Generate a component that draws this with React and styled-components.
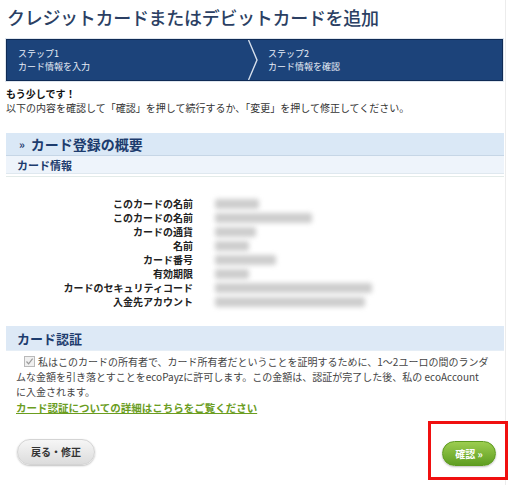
import React from 'react';
import styled, { createGlobalStyle } from 'styled-components';

const GlobalStyle = createGlobalStyle`
  html, body {
    margin: 0;
    padding: 0;
    background: #fff;
  }
  body {
    font-family: "Noto Sans CJK JP", "Noto Sans", "Liberation Sans", sans-serif;
  }
`;

const Page = styled.div`
  width: 499px;
  min-height: 485px;
  padding-left: 6px;
  border-right: 1px solid #ececec;
  box-sizing: content-box;
  display: flex;
  flex-direction: column;
`;

const Title = styled.h1`
  margin: 0;
  padding: 3px 0 0 1px;
  height: 39px;
  box-sizing: border-box;
  font-size: 18px;
  line-height: 28px;
  font-weight: 500;
  color: #2b3f63;
  letter-spacing: -0.3px;
`;

const StepBar = styled.div`
  display: flex;
  height: 42px;
  width: 497px;
  background: #1c437a;
  border: 1px solid #0f2b55;
  box-shadow: 0 0 0 1px #dfe6ee;
  box-sizing: border-box;
`;

const Step = styled.div`
  display: flex;
  flex-direction: column;
  justify-content: center;
  width: ${p => (p.$grow ? 'auto' : '230px')};
  flex: ${p => (p.$grow ? 1 : 'none')};
  padding-left: ${p => (p.$grow ? '10px' : '11px')};
  color: #e8eef7;
  font-size: 9px;
  line-height: 13px;
`;

const Chevron = styled.svg`
  flex: none;
  display: block;
`;

const Intro = styled.div`
  margin-top: 6px;
  font-size: 10px;
  line-height: 14px;
  color: #333;
`;

const Strong = styled.div`
  font-weight: 700;
  color: #111;
`;

const SectionBand = styled.div`
  margin-top: ${p => p.$top || 0}px;
  height: ${p => p.$h}px;
  width: 498px;
  box-sizing: border-box;
  display: flex;
  align-items: center;
  padding-left: ${p => p.$pl || 11}px;
  background: ${p => p.$bg};
  border-bottom: 1px solid ${p => p.$line};
  color: #1d3c6e;
  font-weight: 700;
  font-size: ${p => p.$fs}px;
`;

const Raquo = styled.span`
  font-size: 11px;
  margin-right: 6px;
`;

const InfoGrid = styled.div`
  display: grid;
  grid-template-columns: 187px 1fr;
  column-gap: 22px;
  padding: 20px 0 17px;
  border-top: 1px solid #e3ebe9;
  margin-top: 2px;
  width: 498px;
`;

const Label = styled.div`
  text-align: right;
  font-size: 10px;
  font-weight: 700;
  line-height: 14px;
  color: #222;
  white-space: nowrap;
`;

const ValueCell = styled.div`
  display: flex;
  align-items: center;
  height: 14px;
`;

const Blur = styled.span`
  display: block;
  height: 10px;
  background: #cdcdcd;
  filter: blur(2.5px);
  border-radius: 2px;
`;

const AuthText = styled.p`
  margin: 3px 0 0;
  padding-left: 10px;
  width: 485px;
  font-size: 10px;
  line-height: 15px;
  color: #444;
`;

const CheckBox = styled.span`
  display: inline-block;
  width: 9px;
  height: 9px;
  margin: 0 3px 0 8px;
  border: 1px solid #b9b9b9;
  background: #f0f0f0;
  position: relative;
  top: 1px;
  vertical-align: baseline;
  svg { display: block; }
`;

const MoreLink = styled.a`
  display: block;
  margin: 1px 0 0 10px;
  font-size: 10.5px;
  line-height: 15px;
  font-weight: 700;
  color: #6b9d1f;
  text-decoration: underline;
  cursor: pointer;
`;

const Actions = styled.div`
  display: flex;
  justify-content: space-between;
  align-items: center;
  margin-top: 22px;
  padding: 0 8px 0 11px;
  width: 498px;
  box-sizing: border-box;
`;

const BackButton = styled.button`
  width: 78px;
  height: 26px;
  border: 1px solid #d4d4d4;
  border-radius: 13px;
  background: linear-gradient(#f6f6f6, #dcdcdc);
  box-shadow: 0 1px 2px rgba(0, 0, 0, 0.25);
  font-family: inherit;
  font-size: 10px;
  font-weight: 700;
  color: #333;
  cursor: pointer;
`;

const ConfirmWrap = styled.div`
  position: relative;
  margin-top: 2px;
`;

const ConfirmButton = styled.button`
  width: 54px;
  height: 25px;
  border: 1px solid #5d9a1f;
  border-radius: 13px;
  background: linear-gradient(#9ccd4f, #5f9e22);
  box-shadow: 0 1px 2px rgba(0, 0, 0, 0.25);
  font-family: inherit;
  font-size: 10px;
  font-weight: 700;
  color: #fff;
  cursor: pointer;
  padding: 0;
`;

const Highlight = styled.span`
  position: absolute;
  top: -18px;
  left: -14px;
  right: -12px;
  bottom: -14px;
  border: 3px solid #f01010;
  pointer-events: none;
`;

const rows = [
  ['このカードの名前', 44],
  ['このカードの名前', 97],
  ['カードの通貨', 41],
  ['名前', 34],
  ['カード番号', 61],
  ['有効期限', 34],
  ['カードのセキュリティコード', 157],
  ['入金先アカウント', 150],
];

export default function App() {
  return (
    <>
      <GlobalStyle />
      <Page>
        <Title>クレジットカードまたはデビットカードを追加</Title>
        <StepBar>
          <Step>
            <span>ステップ1</span>
            <span>カード情報を入力</span>
          </Step>
          <Chevron width="10" height="40" viewBox="0 0 10 40">
            <path d="M0.5 0 L9 20 L0.5 40" fill="none" stroke="#d7e0ec" strokeWidth="1.4" />
          </Chevron>
          <Step $grow>
            <span>ステップ2</span>
            <span>カード情報を確認</span>
          </Step>
        </StepBar>

        <Intro>
          <Strong>もう少しです！</Strong>
          <div>以下の内容を確認して「確認」を押して続行するか、「変更」を押して修正してください。</div>
        </Intro>

        <SectionBand $top={18} $h={23} $fs={14} $bg="#dae8f6" $line="#c6d6e6" $pl={13}>
          <Raquo>»</Raquo>カード登録の概要
        </SectionBand>
        <SectionBand $h={18} $fs={11} $bg="#eef4fb" $line="#dfe8ef">
          カード情報
        </SectionBand>

        <InfoGrid>
          {rows.map(([label, w], i) => (
            <React.Fragment key={i}>
              <Label>{label}</Label>
              <ValueCell>
                <Blur style={{ width: w }} />
              </ValueCell>
            </React.Fragment>
          ))}
        </InfoGrid>

        <SectionBand $h={25} $fs={13} $bg="#dde9f6" $line="#e6eef6">
          カード認証
        </SectionBand>

        <AuthText>
          <CheckBox>
            <svg width="9" height="9" viewBox="0 0 9 9">
              <path d="M1.5 4.5 L3.6 6.8 L7.6 1.6" fill="none" stroke="#9a9a9a" strokeWidth="1.2" />
            </svg>
          </CheckBox>
          私はこのカードの所有者で、カード所有者だということを証明するために、1～2ユーロの間のランダ
          <br />
          ムな金額を引き落とすことをecoPayzに許可します。この金額は、認証が完了した後、私の ecoAccount
          <br />
          に入金されます。
        </AuthText>
        <MoreLink>カード認証についての詳細はこちらをご覧ください</MoreLink>

        <Actions>
          <BackButton type="button">戻る・修正</BackButton>
          <ConfirmWrap>
            <ConfirmButton type="button">確認 »</ConfirmButton>
            <Highlight />
          </ConfirmWrap>
        </Actions>
      </Page>
    </>
  );
}
